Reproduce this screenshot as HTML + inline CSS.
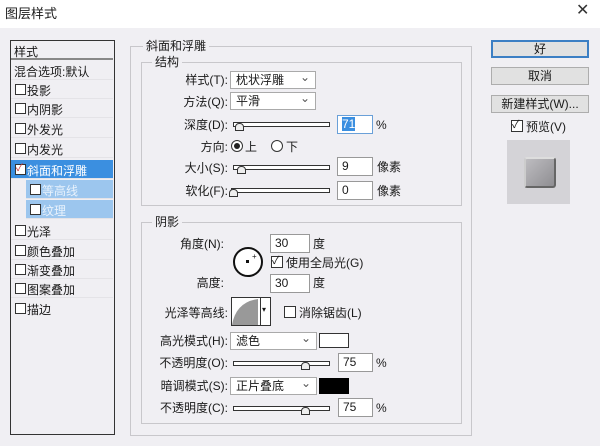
<!DOCTYPE html>
<html><head><meta charset="utf-8"><style>
*{margin:0;padding:0;box-sizing:border-box}
body{width:600px;height:446px;background:#f0eff3;font-family:"Liberation Sans","Noto Sans CJK SC",sans-serif;font-size:12px;color:#1a1a1a;position:relative;overflow:hidden}
.a{position:absolute}
.t{position:absolute;white-space:nowrap;line-height:14px}
.r{text-align:right}
.cb{position:absolute;width:11px;height:11px;border:1px solid #333;background:#fff}
.row{position:absolute;left:11px;width:102px;height:19px;border-bottom:1px solid #e4e3e7}
.row span{position:absolute;top:2px;left:16px;white-space:nowrap}
.row .cb{left:4px;top:4px}
.dd{position:absolute;height:18px;border:1px solid #aaa;background:#fff;padding-left:5px;line-height:16px}
.dd::after{content:"⌄";position:absolute;right:5px;top:-3px;color:#555;font-size:12px}
.in{position:absolute;height:19px;border:1px solid #999;background:#fff;padding-left:4px;line-height:17px}
.sl{position:absolute;height:5px;border:1px solid #333;background:#fff}
.th{position:absolute;width:9px;height:8px;border:1px solid #333;background:#eee;border-radius:4px 4px 0 0}
.grp{position:absolute;border:1px solid #c8c7cb}
.btn{position:absolute;left:491px;width:98px;height:18px;border:1px solid #adadad;background:#e1e1e1;text-align:center;line-height:16px}
</style></head><body>
<div class="a" style="left:0;top:0;width:600px;height:28px;background:#fff"></div>
<div class="t" style="left:5px;top:7px;font-size:13px">图层样式</div>
<div class="t" style="left:576px;top:4px;font-size:16px;color:#333">✕</div>

<div class="a" style="left:10px;top:40px;width:105px;height:395px;border:1px solid #333;background:#f0eff3"></div>
<div class="row" style="top:41px;border-bottom:2px solid #888"><span style="left:3px">样式</span></div>
<div class="row" style="top:61px"><span style="left:3px">混合选项:默认</span></div>
<div class="row" style="top:80px"><div class="cb"></div><span>投影</span></div>
<div class="row" style="top:99px"><div class="cb"></div><span>内阴影</span></div>
<div class="row" style="top:119px"><div class="cb"></div><span>外发光</span></div>
<div class="row" style="top:139px"><div class="cb"></div><span>内发光</span></div>
<div class="row" style="top:160px;background:#3b8fe0;color:#fff"><div class="cb"></div><div class="t" style="left:5px;top:2px;font-size:10px;color:#c33">✓</div><span>斜面和浮雕</span></div>
<div class="row" style="top:180px;left:26px;width:87px;background:#9cc6ee;color:#e8f2fc"><div class="cb"></div><span>等高线</span></div>
<div class="row" style="top:200px;left:26px;width:87px;background:#9cc6ee;color:#e8f2fc"><div class="cb"></div><span>纹理</span></div>
<div class="row" style="top:221px"><div class="cb"></div><span>光泽</span></div>
<div class="row" style="top:241px"><div class="cb"></div><span>颜色叠加</span></div>
<div class="row" style="top:260px"><div class="cb"></div><span>渐变叠加</span></div>
<div class="row" style="top:279px"><div class="cb"></div><span>图案叠加</span></div>
<div class="row" style="top:299px;border:none"><div class="cb"></div><span>描边</span></div>

<div class="grp" style="left:130px;top:46px;width:342px;height:390px"></div>
<div class="t" style="left:143px;top:39px;background:#f0eff3;padding:0 3px">斜面和浮雕</div>
<div class="grp" style="left:141px;top:62px;width:321px;height:144px"></div>
<div class="t" style="left:152px;top:55px;background:#f0eff3;padding:0 3px">结构</div>
<div class="t r" style="left:150px;width:78px;top:73px">样式(T):</div>
<div class="dd" style="left:230px;top:71px;width:86px">枕状浮雕</div>
<div class="t r" style="left:150px;width:78px;top:95px">方法(Q):</div>
<div class="dd" style="left:230px;top:92px;width:86px">平滑</div>
<div class="t r" style="left:150px;width:78px;top:118px">深度(D):</div>
<div class="sl" style="left:233px;top:122px;width:97px"></div><div class="th" style="left:235px;top:123px"></div>
<div class="in" style="left:337px;top:115px;width:36px;border-color:#6aa0d8"><span style="background:#3b8fe0;color:#fff">71</span></div>
<div class="t" style="left:376px;top:118px">%</div>
<div class="t r" style="left:150px;width:78px;top:140px">方向:</div>
<div class="a" style="left:231px;top:140px;width:12px;height:12px;border:1px solid #333;border-radius:50%;background:#fff"><div class="a" style="left:2px;top:2px;width:6px;height:6px;border-radius:50%;background:#222"></div></div>
<div class="t" style="left:245px;top:140px">上</div>
<div class="a" style="left:271px;top:140px;width:12px;height:12px;border:1px solid #333;border-radius:50%;background:#fff"></div>
<div class="t" style="left:286px;top:140px">下</div>
<div class="t r" style="left:150px;width:78px;top:161px">大小(S):</div>
<div class="sl" style="left:233px;top:165px;width:97px"></div><div class="th" style="left:237px;top:166px"></div>
<div class="in" style="left:337px;top:157px;width:36px">9</div>
<div class="t" style="left:377px;top:160px">像素</div>
<div class="t r" style="left:150px;width:78px;top:184px">软化(F):</div>
<div class="sl" style="left:231px;top:188px;width:99px"></div><div class="th" style="left:229px;top:189px"></div>
<div class="in" style="left:337px;top:181px;width:36px">0</div>
<div class="t" style="left:377px;top:184px">像素</div>

<div class="grp" style="left:141px;top:222px;width:321px;height:202px"></div>
<div class="t" style="left:152px;top:215px;background:#f0eff3;padding:0 3px">阴影</div>
<div class="t r" style="left:150px;width:74px;top:237px">角度(N):</div>
<div class="a" style="left:233px;top:247px;width:30px;height:30px;border:2px solid #111;border-radius:50%;background:#fff"><div class="a" style="left:11px;top:11px;width:3px;height:3px;background:#111"></div><div class="t" style="left:17px;top:1px;font-size:8px">+</div></div>
<div class="in" style="left:270px;top:234px;width:40px">30</div>
<div class="t" style="left:313px;top:237px">度</div>
<div class="cb" style="left:271px;top:256px;width:12px;height:12px"></div><div class="t" style="left:272px;top:254px;font-size:11px">✓</div>
<div class="t" style="left:286px;top:256px">使用全局光(G)</div>
<div class="t r" style="left:150px;width:74px;top:276px">高度:</div>
<div class="in" style="left:270px;top:274px;width:40px">30</div>
<div class="t" style="left:313px;top:276px">度</div>
<div class="t r" style="left:150px;width:78px;top:306px">光泽等高线:</div>
<div class="a" style="left:231px;top:297px;width:40px;height:29px;border:1px solid #333;background:#fff;overflow:hidden">
<svg width="29" height="27" style="position:absolute;left:0;top:0"><path d="M0 27 Q4 4 26 1 L26 27 Z" fill="#999"/></svg>
<div class="a" style="left:28px;top:0;width:1px;height:27px;background:#333"></div><div class="t" style="left:30px;top:5px;font-size:8px">▾</div></div>
<div class="cb" style="left:284px;top:306px;width:12px;height:12px"></div>
<div class="t" style="left:299px;top:306px">消除锯齿(L)</div>
<div class="t r" style="left:150px;width:78px;top:334px">高光模式(H):</div>
<div class="dd" style="left:230px;top:332px;width:87px">滤色</div>
<div class="a" style="left:319px;top:333px;width:30px;height:15px;border:1px solid #333;background:#fff"></div>
<div class="t r" style="left:150px;width:78px;top:356px">不透明度(O):</div>
<div class="sl" style="left:233px;top:361px;width:97px"></div><div class="th" style="left:301px;top:362px"></div>
<div class="in" style="left:338px;top:353px;width:35px">75</div>
<div class="t" style="left:376px;top:356px">%</div>
<div class="t r" style="left:150px;width:78px;top:379px">暗调模式(S):</div>
<div class="dd" style="left:230px;top:377px;width:87px">正片叠底</div>
<div class="a" style="left:319px;top:378px;width:30px;height:16px;background:#000"></div>
<div class="t r" style="left:150px;width:78px;top:401px">不透明度(C):</div>
<div class="sl" style="left:233px;top:406px;width:97px"></div><div class="th" style="left:301px;top:407px"></div>
<div class="in" style="left:338px;top:398px;width:35px">75</div>
<div class="t" style="left:376px;top:401px">%</div>

<div class="btn" style="top:40px;border:2px solid #3c7fc4;line-height:14px">好</div>
<div class="btn" style="top:67px">取消</div>
<div class="btn" style="top:95px">新建样式(W)...</div>
<div class="cb" style="left:511px;top:120px;width:12px;height:12px"></div><div class="t" style="left:512px;top:118px;font-size:11px">✓</div>
<div class="t" style="left:526px;top:120px">预览(V)</div>
<div class="a" style="left:507px;top:140px;width:63px;height:64px;background:#d4d3d7"></div>
<div class="a" style="left:524px;top:157px;width:32px;height:31px;background:linear-gradient(135deg,#bdbcc0,#8f8e92);border:2px solid #666;border-top-color:#ddd;border-left-color:#ccc;border-radius:3px"></div>
</body></html>
